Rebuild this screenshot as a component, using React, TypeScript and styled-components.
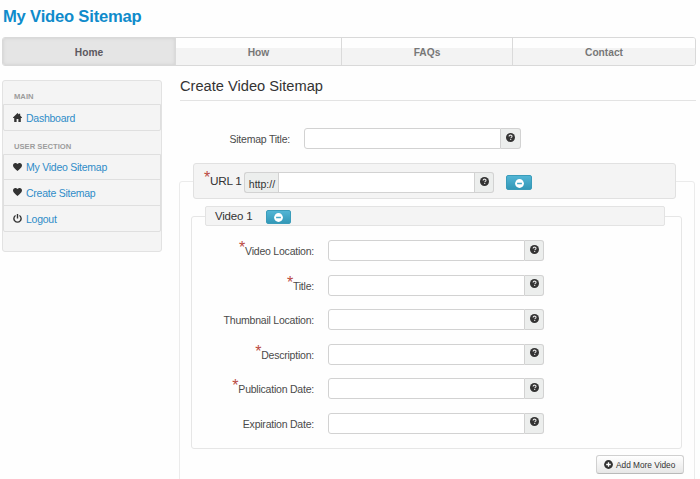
import React from "react";
import styled, { createGlobalStyle } from "styled-components";

const GlobalStyle = createGlobalStyle`
  * { box-sizing: border-box; }
  body {
    margin: 0;
    background: #fefefe;
    overflow: hidden;
    font-family: "Liberation Sans", Arial, sans-serif;
    font-size: 10px;
    color: #333;
  }
`;

const Page = styled.div`
  width: 700px;
  height: 479px;
  padding: 0 4px 0 2px;
  overflow: hidden;
`;

const Brand = styled.h1`
  margin: 0 0 0 1px;
  height: 37px;
  padding-top: 7px;
  font-size: 16.6px;
  letter-spacing: -0.2px;
  line-height: 19px;
  color: #0f8bcb;
  white-space: nowrap;
`;

const Nav = styled.nav`
  display: grid;
  grid-template-columns: 173px 166px 171px 1fr;
  height: 29px;
  border: 1px solid #d9d9d9;
  border-radius: 3px;
  overflow: hidden;
`;

const NavItem = styled.a<{ $active?: boolean }>`
  display: flex;
  align-items: center;
  justify-content: center;
  padding-top: 1px;
  font-size: 10.2px;
  font-weight: bold;
  color: ${(p) => (p.$active ? "#5c5860" : "#777")};
  background: ${(p) =>
    p.$active ? "#e5e5e5" : "linear-gradient(#fefefe 10px, #f3f3f3 10px)"};
  box-shadow: ${(p) => (p.$active ? "inset 0 0 3px 1px #d6d6d6" : "none")};
  border-right: 1px solid #dadada;
  &:last-child { border-right: 0; }
`;

const Columns = styled.div`
  display: flex;
  gap: 17px;
`;

const Sidebar = styled.aside`
  width: 160px;
  height: 172px;
  margin-top: 14px;
  border: 1px solid #e2e2e2;
  border-radius: 3px;
  background: #f4f4f4;
`;

const SideHeading = styled.div<{ $height: number }>`
  height: ${(p) => p.$height}px;
  padding: ${(p) => p.$height - 12}px 0 0 11px;
  font-size: 7.65px;
  line-height: 9px;
  font-weight: bold;
  color: #9c9c9c;
`;

const SideGroup = styled.div`
  border: 1px solid #dfdfdf;
  border-radius: 0 0 2px 2px;
`;

const SideLink = styled.a<{ $height: number }>`
  display: flex;
  align-items: center;
  gap: 4px;
  height: ${(p) => p.$height}px;
  padding-left: 9px;
  font-size: 10.5px;
  letter-spacing: -0.25px;
  color: #2f8cc8;
  & + & { border-top: 1px solid #dfdfdf; }
  svg { color: #333; flex: none; margin-top: -1px; }
`;

const Main = styled.main`
  flex: 1;
  min-width: 0;
`;

const PageHeading = styled.h2`
  margin: 0 0 0 1px;
  height: 35px;
  padding-top: 12px;
  border-bottom: 1px solid #e3e3e3;
  font-size: 14.65px;
  line-height: 17px;
  font-weight: normal;
  color: #333;
`;

const FormRow = styled.div<{ $label: number; $field: number }>`
  display: grid;
  grid-template-columns: ${(p) => p.$label}px ${(p) => p.$field}px;
  column-gap: 14px;
  height: 21px;
`;

const Label = styled.label`
  padding-top: 5px;
  font-size: 10.5px;
  letter-spacing: -0.22px;
  line-height: 12px;
  text-align: right;
  white-space: nowrap;
  color: #4a4a4a;
`;

const Star = styled.span`
  font-size: 16px;
  line-height: 0;
  vertical-align: 2px;
  color: #bb4a42;
`;

const InputGroup = styled.div`
  display: flex;
  height: 21px;
`;

const Field = styled.input<{ $prefixed?: boolean }>`
  flex: 1;
  min-width: 0;
  height: 21px;
  border: 1px solid #d2d2d2;
  border-radius: ${(p) => (p.$prefixed ? "0" : "3px 0 0 3px")};
  background: #fff;
  outline: none;
`;

const AddOn = styled.span<{ $side: "left" | "right"; $width: number }>`
  display: flex;
  align-items: center;
  justify-content: center;
  width: ${(p) => p.$width}px;
  height: 21px;
  border: 1px solid #d2d2d2;
  border-${(p) => (p.$side === "left" ? "right" : "left")}: 0;
  border-radius: ${(p) => (p.$side === "left" ? "3px 0 0 3px" : "0 3px 3px 0")};
  background: #eceeed;
  padding: ${(p) => (p.$side === "left" ? "2px 0 0 1px" : "0 0 3px")};
  font-size: 10.5px;
  color: #333;
`;

const Fieldset = styled.section<{ $kind: "url" | "video" }>`
  border: 1px solid ${(p) => (p.$kind === "url" ? "#ebebeb" : "#e6e6e6")};
  border-radius: 3px;
  ${(p) =>
    p.$kind === "url"
      ? "width: 516px; height: 310px; margin-top: 32px; padding: 0 10px 0 11px;"
      : "width: 491px; height: 233px; margin-top: 17px; padding: 0 17px 0 13px;"}
`;

const UrlLegend = styled.div`
  display: flex;
  width: 483px;
  height: 36px;
  margin: -19px 0 0 2px;
  padding: 8px 0 0 10px;
  border: 1px solid #e1e1e1;
  border-radius: 3px;
  background: #f4f4f4;
`;

const UrlTitle = styled.div`
  width: 40px;
  padding-top: 3px;
  font-size: 11.8px;
  letter-spacing: -0.3px;
  line-height: 13px;
  white-space: nowrap;
`;

const UrlGroup = styled(InputGroup)`
  width: 250px;
`;

const VideoLegend = styled.div`
  display: flex;
  align-items: center;
  width: 460px;
  height: 20px;
  margin: -11px 0 14px 0;
  padding-left: 9px;
  border: 1px solid #e3e3e3;
  border-radius: 2px;
  background: #f4f4f4;
  font-size: 11.5px;
  letter-spacing: -0.2px;
`;

const VideoTitle = styled.span`
  width: 51px;
`;

const RemoveButton = styled.button<{ $offset?: boolean }>`
  display: flex;
  align-items: center;
  justify-content: center;
  width: ${(p) => (p.$offset ? 26 : 25)}px;
  height: ${(p) => (p.$offset ? 15 : 14)}px;
  margin: ${(p) => (p.$offset ? "3px 0 0 12px" : "2px 0 0")};
  padding: 1px 0 0;
  border: 1px solid #3a9cba;
  border-radius: 2px;
  background: linear-gradient(#52b5d5, #3398b7);
  color: #fff;
`;

const Rows = styled.div`
  display: flex;
  flex-direction: column;
  gap: 13.5px;
  padding-top: 0.4px;
`;

const Actions = styled.div`
  display: flex;
  justify-content: flex-end;
  padding-top: 6px;
`;

const AddButton = styled.button`
  display: flex;
  align-items: center;
  gap: 3px;
  width: 88px;
  height: 19px;
  padding: 0 0 0 7px;
  border: 1px solid #d0d0d0;
  border-bottom-color: #b9b9b9;
  border-radius: 3px;
  background: linear-gradient(#fff, #e7e7e7);
  font-family: inherit;
  font-size: 8.3px;
  color: #333;
  white-space: nowrap;
`;

const HomeIcon = () => (
  <svg width="9" height="9" viewBox="0 0 9 9" fill="currentColor">
    <path d="M4.5 0 6 1.4V.7h1.2v1.8L9 4.4v.5H7.8V9H5.4V6H3.6v3H1.2V4.9H0v-.5z" />
  </svg>
);

const HeartIcon = () => (
  <svg width="9" height="8" viewBox="0 0 9 8" fill="currentColor">
    <path d="M4.5 1C5.2.1 6 0 6.7 0 8 0 9 1 9 2.4 9 4.4 6.4 6 4.5 8 2.6 6 0 4.4 0 2.4 0 1 1 0 2.3 0 3 0 3.8.1 4.5 1z" />
  </svg>
);

const PowerIcon = () => (
  <svg width="9" height="9" viewBox="0 0 9 9" fill="none" stroke="currentColor" strokeWidth="1.4">
    <path d="M2.6 1.5a3.6 3.6 0 1 0 3.8 0M4.5 0v4.4" />
  </svg>
);

const HelpIcon = () => (
  <svg width="9" height="9" viewBox="0 0 9 9">
    <circle cx="4.5" cy="4.5" r="4.5" fill="#333" />
    <path d="M3.1 3.5c0-1.9 2.9-1.8 2.9-.1 0 1-1.3.9-1.3 1.9M4.7 6.1v1" fill="none" stroke="#e4e4e4" strokeWidth="1.1" />
  </svg>
);

const MinusIcon = () => (
  <svg width="9" height="9" viewBox="0 0 9 9">
    <circle cx="4.5" cy="4.5" r="4.4" fill="#fff" />
    <path d="M2.1 4.5h4.8" stroke="#45a8c8" strokeWidth="1.5" />
  </svg>
);

const PlusIcon = () => (
  <svg width="9" height="9" viewBox="0 0 9 9">
    <circle cx="4.5" cy="4.5" r="4.4" fill="#333" />
    <path d="M2.2 4.5h4.6M4.5 2.2v4.6" stroke="#fff" strokeWidth="1.3" />
  </svg>
);

const fields = [
  { label: "Video Location:", required: true },
  { label: "Title:", required: true },
  { label: "Thumbnail Location:", required: false },
  { label: "Description:", required: true },
  { label: "Publication Date:", required: true },
  { label: "Expiration Date:", required: false },
];

const HelpField = ({ addOnWidth = 19 }: { addOnWidth?: number }) => (
  <InputGroup>
    <Field />
    <AddOn $side="right" $width={addOnWidth}><HelpIcon /></AddOn>
  </InputGroup>
);

const TitleRow = styled(FormRow)`
  margin-top: 27px;
`;

export default function App() {
  return (
    <Page>
      <GlobalStyle />
      <Brand>My Video Sitemap</Brand>
      <Nav>
        <NavItem $active>Home</NavItem>
        <NavItem>How</NavItem>
        <NavItem>FAQs</NavItem>
        <NavItem>Contact</NavItem>
      </Nav>
      <Columns>
        <Sidebar>
          <SideHeading $height={23}>MAIN</SideHeading>
          <SideGroup>
            <SideLink $height={25}><HomeIcon />Dashboard</SideLink>
          </SideGroup>
          <SideHeading $height={23}>USER SECTION</SideHeading>
          <SideGroup>
            <SideLink $height={24}><HeartIcon />My Video Sitemap</SideLink>
            <SideLink $height={26}><HeartIcon />Create Sitemap</SideLink>
            <SideLink $height={26}><PowerIcon />Logout</SideLink>
          </SideGroup>
        </Sidebar>
        <Main>
          <PageHeading>Create Video Sitemap</PageHeading>
          <TitleRow $label={111} $field={217}>
            <Label>Sitemap Title:</Label>
            <HelpField addOnWidth={20} />
          </TitleRow>
          <Fieldset $kind="url">
            <UrlLegend>
              <UrlTitle><Star>*</Star>URL 1</UrlTitle>
              <UrlGroup>
                <AddOn $side="left" $width={34}>http://</AddOn>
                <Field $prefixed />
                <AddOn $side="right" $width={19}><HelpIcon /></AddOn>
              </UrlGroup>
              <RemoveButton $offset><MinusIcon /></RemoveButton>
            </UrlLegend>
            <Fieldset $kind="video">
              <VideoLegend>
                <VideoTitle>Video 1</VideoTitle>
                <RemoveButton><MinusIcon /></RemoveButton>
              </VideoLegend>
              <Rows>
                {fields.map((f) => (
                  <FormRow key={f.label} $label={109} $field={216}>
                    <Label>{f.required && <Star>*</Star>}{f.label}</Label>
                    <HelpField />
                  </FormRow>
                ))}
              </Rows>
            </Fieldset>
            <Actions>
              <AddButton><PlusIcon />Add More Video</AddButton>
            </Actions>
          </Fieldset>
        </Main>
      </Columns>
    </Page>
  );
}
